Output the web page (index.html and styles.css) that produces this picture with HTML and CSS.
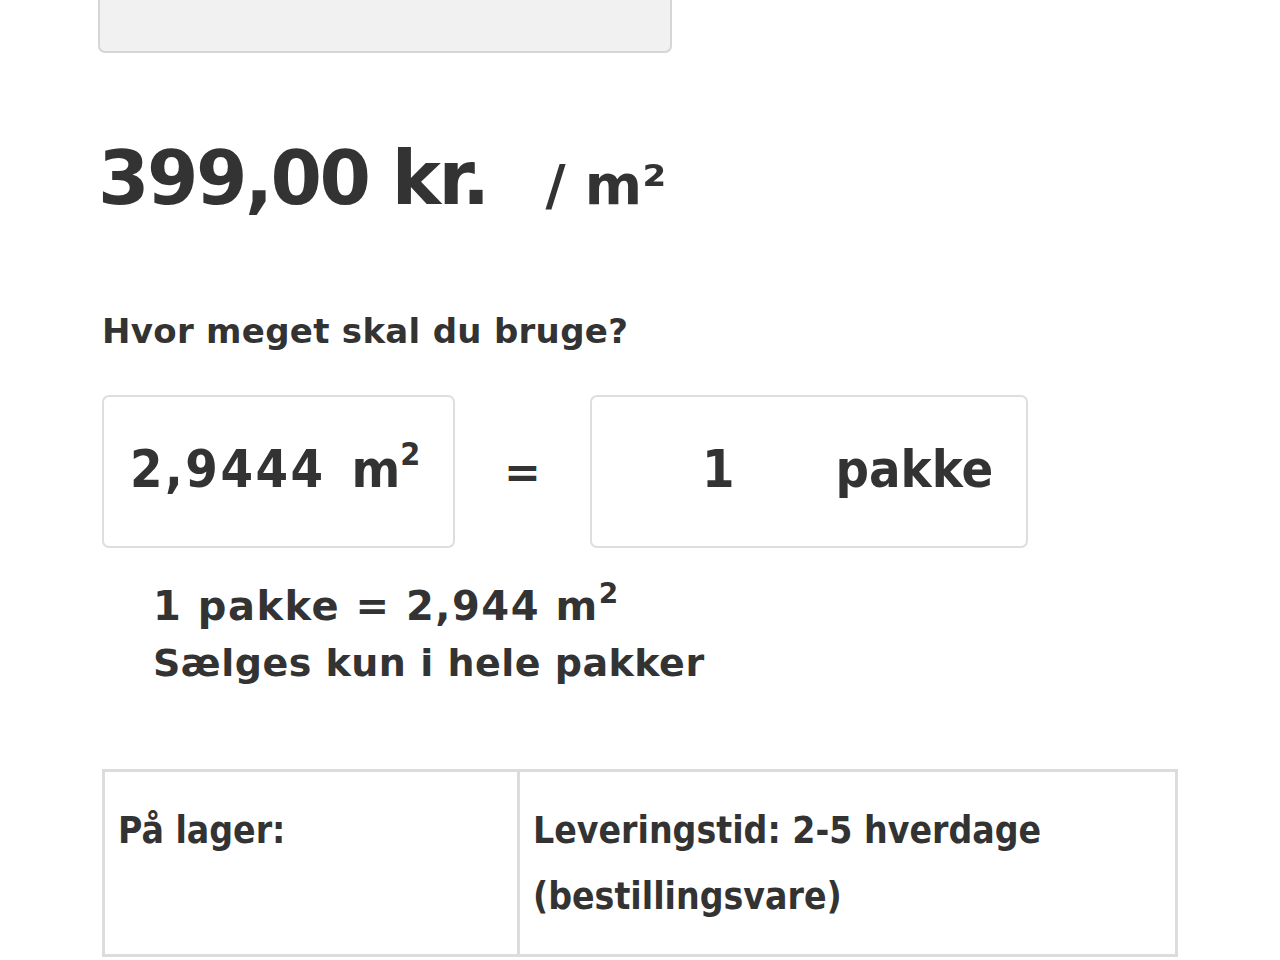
FILE: index.html
```html
<!DOCTYPE html>
<html lang="da">
  <head>
    <meta charset="UTF-8" />
    <meta name="viewport" content="width=device-width, initial-scale=1.0" />
    <title>Produkt</title>
    <link rel="stylesheet" href="styles.css">
  </head>
  <body>
    <div class="page">
      <div class="variant-box"></div>

      <div class="price">
        <span class="price-amount">399,00 kr.</span>
        <span class="price-unit">/ m²</span>
      </div>

      <div class="calc">
        <label class="calc-label">Hvor meget skal du bruge?</label>
        <div class="calc-row">
          <div class="calc-field calc-area">
            <span class="calc-value">2,9444</span>
            <span class="calc-suffix">m<sup>2</sup></span>
          </div>
          <div class="calc-equals">=</div>
          <div class="calc-field calc-packs">
            <span class="calc-value">1</span>
            <span class="calc-suffix">pakke</span>
          </div>
        </div>
        <div class="calc-note">
          <div class="calc-note-main">1 pakke = 2,944 m<sup>2</sup></div>
          <div>Sælges kun i hele pakker</div>
        </div>
      </div>

      <table class="stock">
        <tr>
          <td class="stock-label">På lager:</td>
          <td class="stock-value">Leveringstid: 2-5 hverdage (bestillingsvare)</td>
        </tr>
      </table>
    </div>
  </body>
</html>
```

FILE: styles.css
```css
* {
  margin: 0;
  padding: 0;
  box-sizing: border-box;
}

body {
  font-family: 'DejaVu Sans', 'Noto Sans', sans-serif;
  font-weight: 700;
  color: #333;
  background: white;
}

.page {
  padding-left: 98px;
  width: 1180px;
}

.variant-box {
  width: 574px;
  height: 53px;
  background: #f1f1f1;
  border: 2px solid #d6d6d6;
  border-top: none;
  border-radius: 0 0 7px 7px;
}

.price {
  margin-top: 82px;
  height: 90px;
  display: flex;
  align-items: baseline;
}

.price-amount {
  font-size: 74px;
  letter-spacing: -2.5px;
}

.price-unit {
  font-size: 55px;
  margin-left: 58px;
}

.calc {
  margin-top: 86px;
  padding-left: 4px;
}

.calc-label {
  display: block;
  font-size: 34px;
  font-weight: 600;
  letter-spacing: 0.3px;
}

.calc-row {
  display: flex;
  align-items: center;
  margin-top: 44px;
}

.calc-field {
  height: 153px;
  padding-bottom: 6px;
  border: 2px solid #dedede;
  border-radius: 7px;
  display: flex;
  align-items: center;
  font-family: 'DejaVu Sans Condensed', 'DejaVu Sans', sans-serif;
  font-stretch: condensed;
  font-size: 52px;
}

.calc-area {
  width: 353px;
  padding-left: 26px;
}

.calc-area .calc-value {
  letter-spacing: 2.5px;
}

.calc-area .calc-suffix {
  margin-left: 26px;
}

.calc-field sup {
  font-size: 32px;
  vertical-align: 22px;
  line-height: 0;
}

.calc-equals {
  width: 135px;
  text-align: center;
  font-size: 44px;
}

.calc-packs {
  width: 438px;
  padding-left: 110px;
}

.calc-packs .calc-suffix {
  margin-left: 101px;
}

.calc-note {
  margin-top: 30px;
  padding-left: 51px;
  font-size: 38px;
  line-height: 57px;
  font-weight: 600;
  letter-spacing: 0.5px;
}

.calc-note-main {
  font-size: 40px;
  font-weight: 800;
  letter-spacing: 1.5px;
}

.calc-note sup {
  font-size: 28px;
  vertical-align: 17px;
  line-height: 0;
}

.stock {
  margin-top: 77px;
  margin-left: 4px;
  width: 1076px;
  border-collapse: collapse;
  font-family: 'DejaVu Sans Condensed', 'DejaVu Sans', sans-serif;
  font-stretch: condensed;
  font-size: 37px;
}

.stock td {
  border: 3px solid #dcdcdc;
  vertical-align: top;
  padding: 26px 13px 24px;
  line-height: 66px;
}

.stock-label {
  width: 415px;
}

.stock-value {
  padding-right: 60px;
}
```
